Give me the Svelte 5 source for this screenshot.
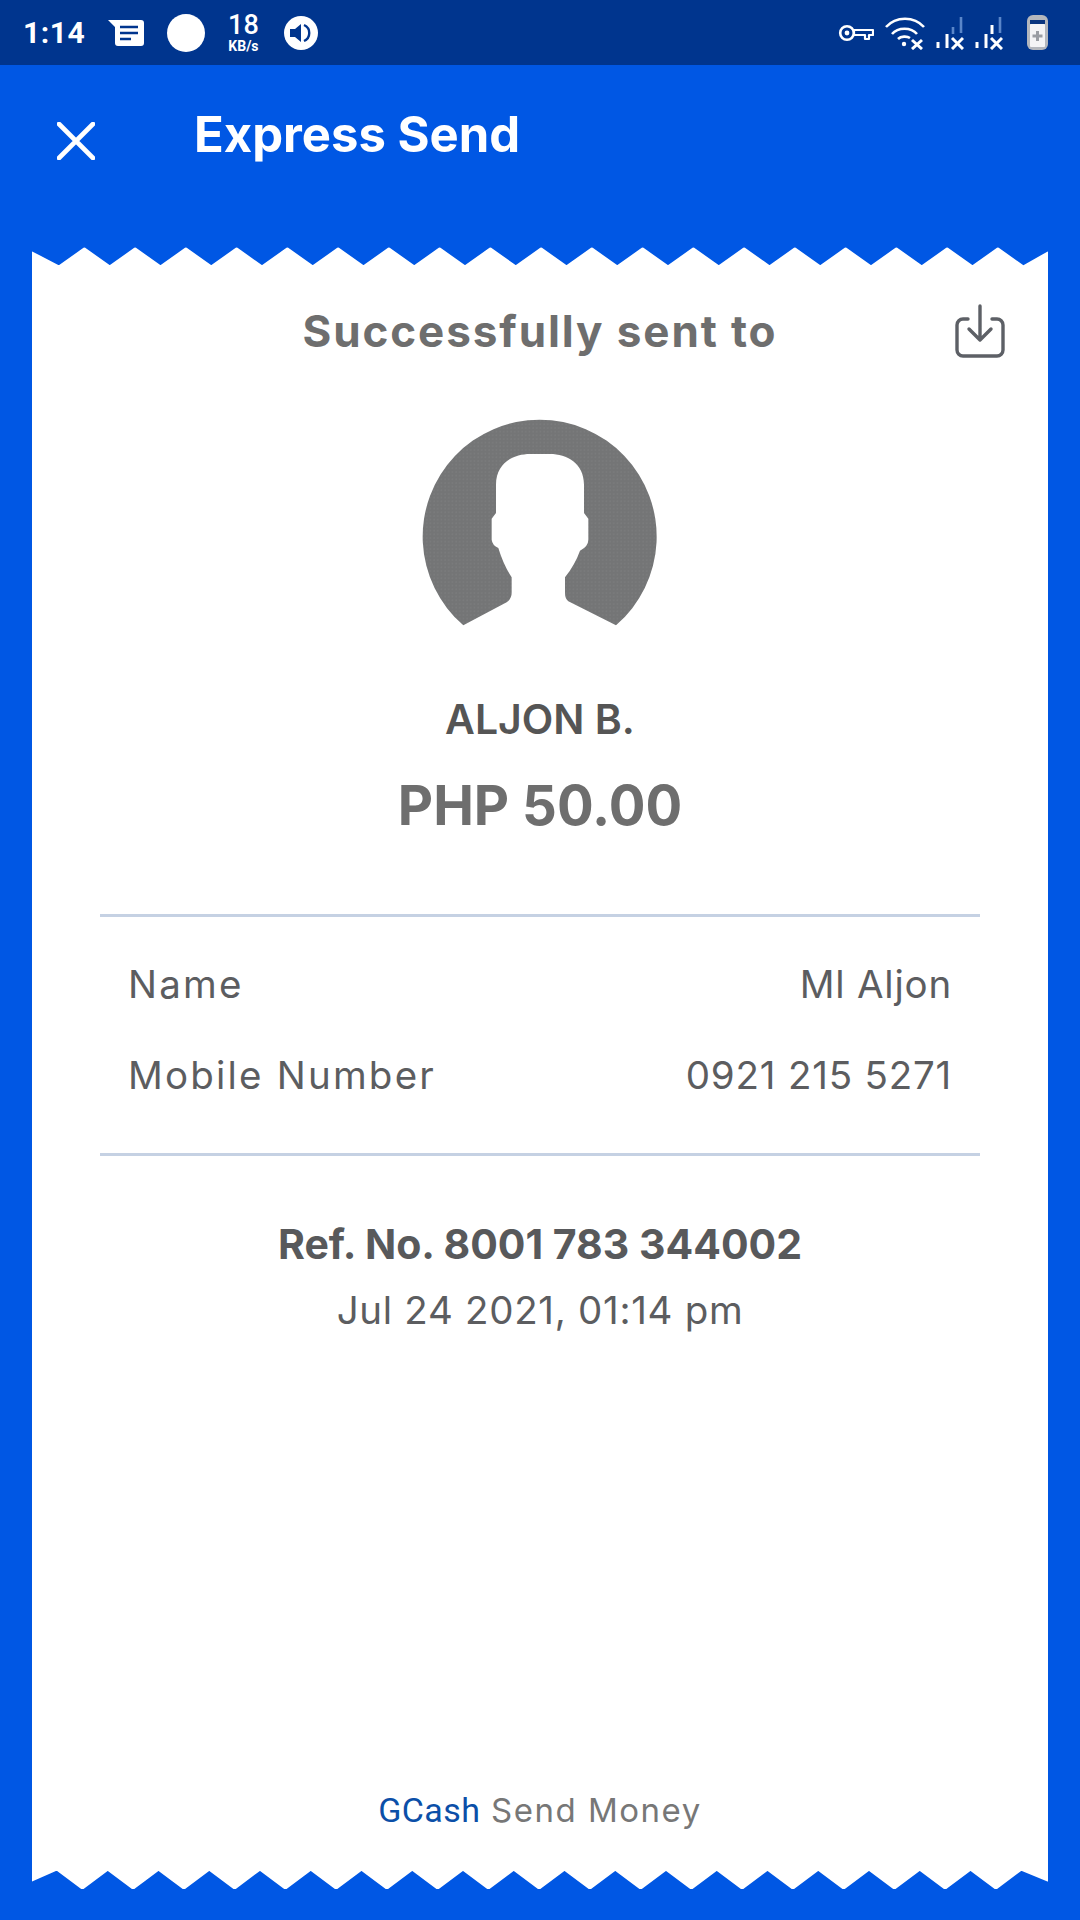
<script>
    const period = 50.75
    const rows = [
        { label: 'Name', value: 'Ml Aljon' },
        { label: 'Mobile Number', value: '0921 215 5271' },
    ]

    // white saw edge, drawn across the 1016px wide card
    function saw(first, firstY, nextY, base, startY, endY) {
        let d = `M0 ${base} L0 ${startY}`
        let i = 0
        for (let x = first; x < 1010; x += period / 2) {
            d += ` L${x} ${i % 2 == 0 ? firstY : nextY}`
            i++
        }
        d += ` L1016 ${endY} L1016 ${base} Z`
        return d
    }

    const topEdge = saw(27, 20, 2, 23, 6, 6)
    const bottomEdge = saw(25, 2, 21, 0, 13, 13)
</script>

<div class="screen">
    <div class="status">
        <div class="group left">
            <span class="time">1:14</span>
            <svg class="msg" width="36" height="28" viewBox="0 0 36 28">
                <path d="M0 1 H33 a3 3 0 0 1 3 3 V24 a3 3 0 0 1 -3 3 H10 a3 3 0 0 1 -3 -3 V8 Z" fill="#fff"/>
                <path d="M12 8 H30 M12 14 H30 M12 20 H23" stroke="#00358e" stroke-width="2.6"/>
            </svg>
            <span class="dot"></span>
            <span class="speed"><b>18</b><small>KB/s</small></span>
            <svg width="34" height="34" viewBox="0 0 34 34">
                <circle cx="17" cy="17" r="17" fill="#fff"/>
                <path d="M6 13 H11 L17 8 V26 L11 21 H6 Z" fill="#00358e"/>
                <path d="M20 9 C27 12 27 22 20 25" fill="none" stroke="#00358e" stroke-width="2.4"/>
            </svg>
        </div>
        <div class="group right">
            <svg width="36" height="18" viewBox="0 0 36 18" fill="none">
                <circle cx="9" cy="9" r="6.8" stroke="#fff" stroke-width="2.6"/>
                <circle cx="9" cy="9" r="2.4" fill="#fff"/>
                <path d="M16 6 H35 V11 H31 V15 H27 V11 H16 Z" stroke="#fff" stroke-width="2.2" stroke-linejoin="round"/>
            </svg>
            <svg width="40" height="34" viewBox="0 0 40 34" fill="none" stroke="#fff" stroke-width="2.6">
                <path d="M1 11 C11 0 29 0 39 11"/>
                <path d="M7 18 C13 11 26 11 32 18"/>
                <path d="M13 23 C16 20 22 20 25 22"/>
                <circle cx="19" cy="28" r="2.2" fill="#fff" stroke="none"/>
                <path d="M27 24 L37 33 M37 24 L27 33" stroke-width="3"/>
            </svg>
            <svg class="sig" width="28" height="34" viewBox="0 0 28 34">
                <path d="M2 26 V32" stroke="#fff" stroke-width="3"/>
                <path d="M11 18 V32" stroke="#fff" stroke-width="3"/>
                <path d="M17 11 V18" stroke="#5a86c9" stroke-width="2.6"/>
                <path d="M25 1 V17" stroke="#5a86c9" stroke-width="2.6"/>
                <path d="M16 22 L27 33 M27 22 L16 33" stroke="#fff" stroke-width="3"/>
            </svg>
            <svg class="sig" width="28" height="34" viewBox="0 0 28 34">
                <path d="M2 26 V32" stroke="#fff" stroke-width="3"/>
                <path d="M11 18 V32" stroke="#fff" stroke-width="3"/>
                <path d="M17 9 V18" stroke="#fff" stroke-width="3"/>
                <path d="M25 1 V17" stroke="#5a86c9" stroke-width="2.6"/>
                <path d="M16 22 L27 33 M27 22 L16 33" stroke="#fff" stroke-width="3"/>
            </svg>
            <svg class="bat" width="21" height="35" viewBox="0 0 21 35">
                <rect width="21" height="35" rx="6" fill="#b4b7bd"/>
                <rect x="3" y="5" width="15" height="4" fill="#0a357f"/>
                <rect x="3" y="9" width="15" height="23" rx="1" fill="#f4f4f6"/>
                <path d="M10.5 16 V26 M5.5 21 H15.5" stroke="#9a9da3" stroke-width="3"/>
            </svg>
        </div>
    </div>

    <div class="header">
        <svg width="38" height="38" viewBox="0 0 38 38">
            <path d="M2 2 L36 36 M36 2 L2 36" stroke="#fff" stroke-width="4.6" stroke-linecap="round"/>
        </svg>
        <h1>Express Send</h1>
    </div>

    <div class="receipt">
        <svg class="edge" width="1016" height="22" viewBox="0 0 1016 22"><path d={topEdge} class="tooth"/></svg>
        <div class="card">
            <div class="sent">
                <h2>Successfully sent to</h2>
                <svg class="save" width="50" height="54" viewBox="0 0 50 54" fill="none" stroke="#5d6066" stroke-width="3.4" stroke-linecap="round" stroke-linejoin="round">
                    <path d="M25 2 V35 M14 25 L25 36 L36 25"/>
                    <path d="M13 15 H8 a6 6 0 0 0 -6 6 V46 a6 6 0 0 0 6 6 H42 a6 6 0 0 0 6 -6 V21 a6 6 0 0 0 -6 -6 H37"/>
                </svg>
            </div>

            <svg class="avatar" width="240" height="212" viewBox="60 50 720 636">
                <defs>
                    <pattern id="speck" width="11" height="11" patternUnits="userSpaceOnUse">
                        <rect width="11" height="11" fill="#747576"/>
                        <circle cx="3" cy="3" r="1.3" fill="#9a9b9c"/>
                    </pattern>
                </defs>
                <path fill="url(#speck)" d="M190 672 A351 351 0 1 1 648 672 L505 600 Q495 592 495 575 V528 Q525 490 540 448 Q565 435 565 415 V352 L552 335 V250 C552 185 500 158 450 158 H390 C340 158 288 185 288 250 V335 L275 352 V415 Q277 432 295 440 Q310 490 335 528 V575 Q335 592 320 603 Z"/>
            </svg>

            <p class="who">ALJON B.</p>
            <p class="amount">PHP 50.00</p>

            <div class="details">
                {#each rows as row}
                    <div class="row">
                        <span class="label">{row.label}</span>
                        <span>{row.value}</span>
                    </div>
                {/each}
            </div>

            <p class="ref">Ref. No. 8001 783 344002</p>
            <p class="date">Jul 24 2021, 01:14 pm</p>

            <p class="foot"><span class="brand">GCash</span> Send Money</p>
        </div>
        <svg class="edge" width="1016" height="22" viewBox="0 0 1016 22"><path d={bottomEdge} class="tooth"/></svg>
    </div>
</div>

<style>
    :global(body) {
        margin: 0;
        background: #0057e4;
    }
    p, h1, h2 {
        margin: 0;
    }
    svg {
        display: block;
        flex: none;
    }
    .screen {
        display: flex;
        flex-direction: column;
        height: 1920px;
        width: 1080px;
        background: #0057e4;
        overflow: hidden;
    }
    .status {
        height: 65px;
        background: #00358e;
        display: flex;
        align-items: center;
        justify-content: space-between;
        padding: 0 32px 0 23px;
        color: #fff;
        font-family: Roboto, sans-serif;
    }
    .group {
        display: flex;
        align-items: center;
    }
    .left {
        gap: 23px;
    }
    .right {
        gap: 11px;
    }
    .time {
        font-size: 30px;
        font-weight: 700;
        letter-spacing: 0.5px;
    }
    .dot {
        width: 38px;
        height: 38px;
        border-radius: 50%;
        background: #fff;
    }
    .speed {
        display: flex;
        flex-direction: column;
        align-items: center;
        margin-right: 2px;
    }
    .speed b {
        font-size: 27px;
        font-weight: 500;
        line-height: 28px;
    }
    .speed small {
        font-size: 14px;
        font-weight: 700;
        line-height: 15px;
    }
    .bat {
        margin-left: 13px;
    }
    .header {
        height: 183px;
        box-sizing: border-box;
        padding: 57px 0 0 57px;
        display: flex;
        align-items: flex-start;
        gap: 99px;
    }
    h1 {
        font-family: Inter, sans-serif;
        font-size: 49px;
        font-weight: 700;
        line-height: 56px;
        margin-top: -15px;
        color: #fff;
    }
    .receipt {
        flex: 1;
        margin: 0 32px 32px;
        display: flex;
        flex-direction: column;
    }
    .edge {
        margin: -1px 0;
        position: relative;
    }
    .tooth {
        fill: #fff;
        stroke: #fff;
        stroke-width: 3px;
        stroke-linejoin: round;
    }
    .card {
        flex: 1;
        background: #fff;
        display: flex;
        flex-direction: column;
        align-items: center;
        font-family: Inter, sans-serif;
        color: #5c5d60;
    }
    .sent {
        align-self: stretch;
        position: relative;
        padding-top: 35px;
    }
    h2 {
        text-align: center;
        font-size: 44px;
        font-weight: 700;
        line-height: 56px;
        letter-spacing: 1.9px;
        color: #6e6e6e;
    }
    .save {
        position: absolute;
        right: 43px;
        top: 36px;
    }
    .avatar {
        margin-top: 59px;
    }
    .who {
        margin-top: 66px;
        font-size: 41px;
        font-weight: 600;
        line-height: 46px;
        color: #555;
    }
    .amount {
        margin-top: 30px;
        font-size: 54.5px;
        font-weight: 700;
        line-height: 66px;
        color: #6e6e6e;
    }
    .details {
        align-self: stretch;
        margin: 76px 68px 0;
        padding: 44px 28px 55px;
        border-top: 3px solid #c5d1e3;
        border-bottom: 3px solid #c5d1e3;
        display: flex;
        flex-direction: column;
        gap: 45px;
    }
    .row {
        display: flex;
        justify-content: space-between;
        font-size: 38.5px;
        line-height: 46px;
        letter-spacing: 0.8px;
    }
    .label {
        letter-spacing: 2.2px;
    }
    .ref {
        margin-top: 63px;
        font-size: 41px;
        font-weight: 700;
        line-height: 50px;
        color: #58595b;
    }
    .date {
        margin-top: 18px;
        font-size: 38.5px;
        line-height: 46px;
        letter-spacing: 0.7px;
    }
    .foot {
        margin-top: auto;
        margin-bottom: 38px;
        font-size: 33px;
        line-height: 40px;
        letter-spacing: 1.5px;
        color: #777;
    }
    .brand {
        color: #0b4fa8;
        font-family: Roboto, sans-serif;
        font-size: 34px;
        letter-spacing: 0.4px;
    }
</style>
